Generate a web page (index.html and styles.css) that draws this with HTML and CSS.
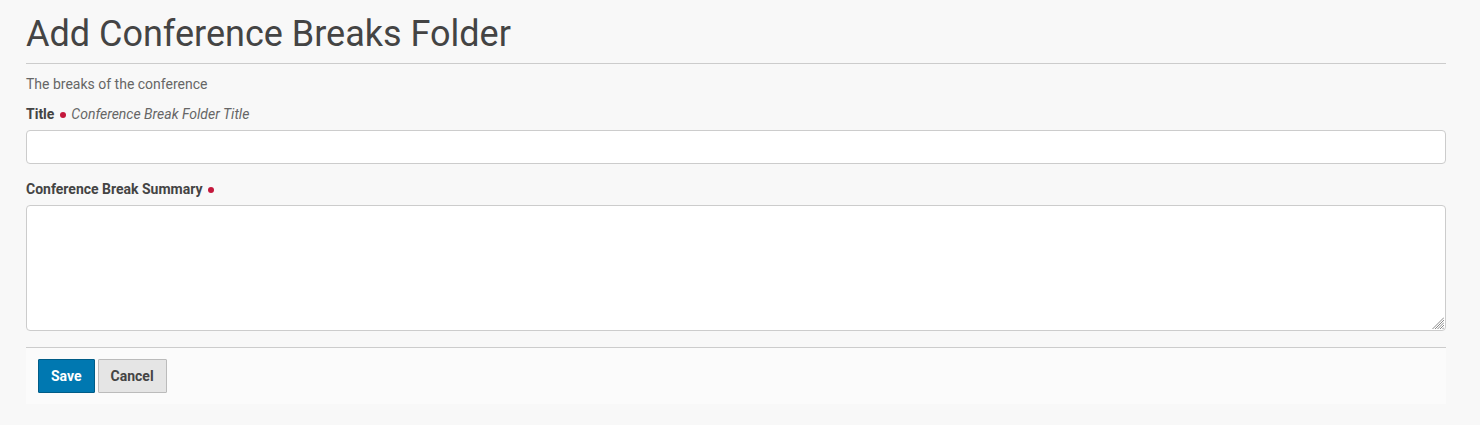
FILE: index.html
```html
<!DOCTYPE html>
<html lang="en">
<head>
<meta charset="utf-8">
<title>Add Conference Breaks Folder</title>
<link rel="stylesheet" href="styles.css">
</head>
<body>
<div class="page">
  <h1 class="heading">Add Conference Breaks Folder</h1>
  <p class="description">The breaks of the conference</p>
  <form class="form">
    <div class="field">
      <label class="label" for="title">Title <span class="required"></span> <span class="help">Conference Break Folder Title</span></label>
      <input class="input" id="title" type="text">
    </div>
    <div class="field field-summary">
      <label class="label" for="summary">Conference Break Summary <span class="required"></span></label>
      <div class="textarea-wrap">
        <textarea class="textarea" id="summary"></textarea>
        <svg class="grip" width="12" height="12" viewBox="0 0 12 12" aria-hidden="true">
          <g stroke="#8a8a8a" stroke-width="1">
            <line x1="12" y1="0.5" x2="0.5" y2="12"/>
            <line x1="12" y1="3" x2="3" y2="12"/>
            <line x1="12" y1="5.5" x2="5.5" y2="12"/>
            <line x1="12" y1="8" x2="8" y2="12"/>
            <line x1="12" y1="10.5" x2="10.5" y2="12"/>
          </g>
        </svg>
      </div>
    </div>
    <div class="actions">
      <button type="button" class="btn btn-primary">Save</button>
      <button type="button" class="btn btn-secondary">Cancel</button>
    </div>
  </form>
</div>
</body>
</html>
```
FILE: styles.css
```css
html, body {
  margin: 0;
  padding: 0;
  background: #f8f8f8;
}
body {
  font-family: Roboto, "Liberation Sans", sans-serif;
  color: #444;
  font-size: 14px;
}
.page {
  padding: 14px 34px 0 26px;
}
.heading {
  margin: 0;
  font-size: 36px;
  font-weight: 400;
  line-height: 40px;
  color: #444;
  padding-bottom: 9px;
  border-bottom: 1px solid #ccc;
}
.description {
  margin: 10px 0 0;
  line-height: 20px;
  color: #666;
  font-size: 14px;
}
.form {
  margin: 10px 0 0;
}
.field {
  display: flex;
  flex-direction: column;
}
.field-summary {
  margin-top: 15px;
}
.label {
  font-weight: 700;
  line-height: 20px;
  color: #444;
  margin-bottom: 6px;
}
.required {
  display: inline-block;
  width: 6px;
  height: 6px;
  border-radius: 50%;
  background: #c4183c;
  vertical-align: 1px;
  margin: 0 2px;
}
.help {
  font-weight: 400;
  font-style: italic;
  color: #666;
}
.input, .textarea {
  box-sizing: border-box;
  width: 100%;
  border: 1px solid #ccc;
  border-radius: 4px;
  background: #fff;
  font-family: inherit;
  font-size: 14px;
  margin: 0;
  padding: 6px 12px;
}
.input {
  height: 34px;
}
.textarea-wrap {
  position: relative;
}
.textarea {
  height: 126px;
  display: block;
  resize: none;
}
.grip {
  position: absolute;
  right: 2px;
  bottom: 2px;
  pointer-events: none;
}
.actions {
  margin-top: 16px;
  border-top: 1px solid #ccc;
  background: #fbfbfb;
  padding: 11px 12px;
  display: flex;
  gap: 3px;
}
.btn {
  height: 34px;
  padding: 0 12px;
  font-family: inherit;
  font-size: 14px;
  font-weight: 700;
  border-radius: 1px;
  cursor: pointer;
}
.btn-primary {
  background: #0078b1;
  border: 1px solid #005c87;
  color: #fff;
}
.btn-secondary {
  background: #e5e5e5;
  border: 1px solid #bbb;
  color: #444;
}
```
